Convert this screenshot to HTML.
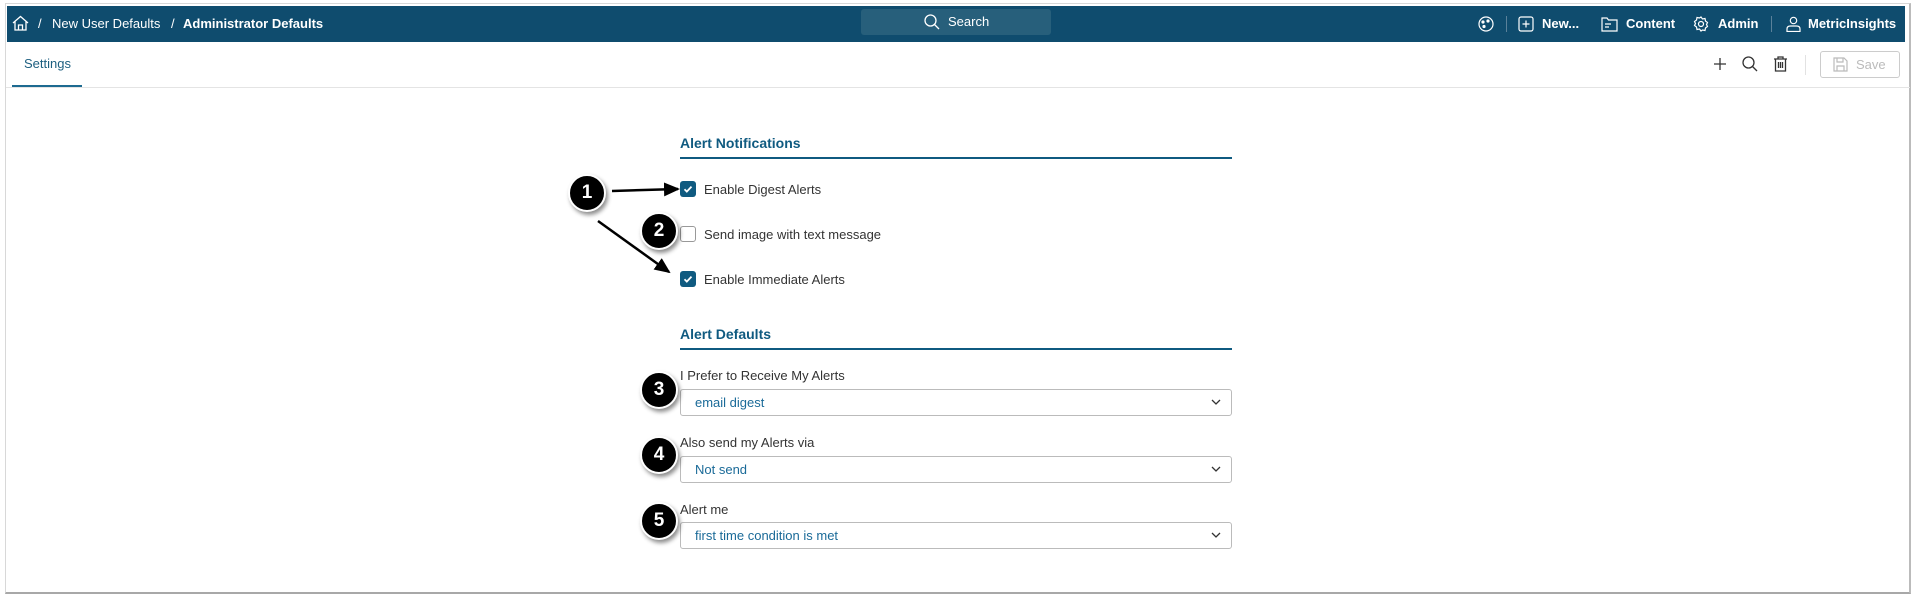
<!DOCTYPE html>
<html><head><meta charset="utf-8"><style>
*{box-sizing:border-box;margin:0;padding:0}
body{width:1913px;height:597px;background:#fff;font-family:"Liberation Sans",sans-serif;position:relative;overflow:hidden}
.frame{position:absolute;left:5px;top:3px;width:1906px;height:591px;border:1px solid #d8d8d8;border-bottom:2px solid #a8a8a8;border-right:2px solid #bbb}
.hdr{position:absolute;left:7px;top:6px;width:1898px;height:36px;background:#0f4c6e;color:#fff;font-size:13px}
.a{position:absolute;top:0;line-height:36px;white-space:nowrap}
.srch{position:absolute;left:854px;top:3px;width:190px;height:26px;background:#275f7b;border-radius:3px}
.t{position:absolute;white-space:nowrap;font-size:13px;color:#333}
.cb{position:absolute;left:680px;width:16px;height:16px;border-radius:3px;background:#0f5a80}
.cb.off{background:#fff;border:1.5px solid #999}
.sec{position:absolute;left:680px;font-size:14px;font-weight:bold;color:#0f5a80}
.line{position:absolute;left:680px;width:552px;height:2px;background:#0f5a80}
.sel{position:absolute;left:680px;width:552px;height:27px;border:1px solid #bbb;border-radius:3px;font-size:13px;color:#1a6a98;padding-left:14px;line-height:25px}
.sel svg{position:absolute;right:10px;top:9px}
.c{position:absolute;width:38px;height:38px;border-radius:50%;background:#000;border:2px solid #fff;box-shadow:2px 3px 4px rgba(0,0,0,.45);color:#fff;font-weight:bold;font-size:19px;text-align:center;line-height:34px}
</style></head><body>
<div class="frame"></div>
<div class="hdr">
<svg style="position:absolute;left:5px;top:9px" width="17" height="16" viewBox="0 0 17 16" fill="none" stroke="#fff" stroke-width="1.3"><path d="M1 8L8.5 1.5 16 8M3 6.5V15h11V6.5M6.5 15v-5h4v5"/></svg>
<span class="a" style="left:31px">/</span>
<span class="a" style="left:45px">New User Defaults</span>
<span class="a" style="left:164px">/</span>
<span class="a" style="left:176px;font-weight:bold">Administrator Defaults</span>
<div class="srch"><svg style="position:absolute;left:63px;top:5px" width="16" height="16" viewBox="0 0 16 16" fill="none" stroke="#fff" stroke-width="1.3"><circle cx="6.5" cy="6.5" r="5.5"/><path d="M10.5 10.5L15 15"/></svg><span style="position:absolute;left:87px;top:0;line-height:26px">Search</span></div>
<svg style="position:absolute;left:1471px;top:10px" width="16" height="16" viewBox="0 0 16 16" fill="none" stroke="#fff" stroke-width="1.2"><circle cx="8" cy="8" r="7"/><circle cx="5" cy="6" r="1" fill="#fff"/><circle cx="10" cy="5" r="1" fill="#fff"/><circle cx="6" cy="10.5" r="1" fill="#fff"/></svg>
<div style="position:absolute;left:1499px;top:10px;width:1px;height:16px;background:#5a819a"></div>
<svg style="position:absolute;left:1511px;top:10px" width="16" height="16" viewBox="0 0 16 16" fill="none" stroke="#fff" stroke-width="1.2"><rect x="1" y="1" width="14" height="14" rx="2"/><path d="M8 4.5v7M4.5 8h7"/></svg>
<span class="a" style="left:1535px;font-weight:bold">New...</span>
<svg style="position:absolute;left:1594px;top:10px" width="17" height="16" viewBox="0 0 17 16" fill="none" stroke="#fff" stroke-width="1.2"><path d="M1 2h5l1.5 2H16v11H1z"/><path d="M4 8h6M4 11h4"/></svg>
<span class="a" style="left:1619px;font-weight:bold">Content</span>
<svg style="position:absolute;left:1686px;top:10px" width="16" height="16" viewBox="0 0 16 16" fill="none" stroke="#fff" stroke-width="1.2"><circle cx="8" cy="8" r="2.5"/><path d="M8 1l1.5 2 2.5-.5.5 2.5 2 1.5-1 2 1 2-2 1.5-.5 2.5-2.5-.5L8 15l-1.5-2-2.5.5-.5-2.5-2-1.5 1-2-1-2 2-1.5.5-2.5 2.5.5z"/></svg>
<span class="a" style="left:1711px;font-weight:bold">Admin</span>
<div style="position:absolute;left:1764px;top:10px;width:1px;height:16px;background:#5a819a"></div>
<svg style="position:absolute;left:1779px;top:10px" width="15" height="16" viewBox="0 0 15 16" fill="none" stroke="#fff" stroke-width="1.2"><circle cx="7.5" cy="4.5" r="3.2"/><path d="M1 15.5v-2.5c0-2 1.5-3 3.5-3h6c2 0 3.5 1 3.5 3v2.5z"/></svg>
<span class="a" style="left:1801px;font-weight:bold">MetricInsights</span>
</div>
<span class="t" style="left:24px;top:56px;color:#1d5f80">Settings</span>
<div style="position:absolute;left:12px;top:85px;width:70px;height:2px;background:#1d6a90"></div>
<div style="position:absolute;left:6px;top:87px;width:1904px;height:1px;background:#e4e4e4"></div>
<svg style="position:absolute;left:1713px;top:57px" width="14" height="14" viewBox="0 0 14 14" stroke="#333" stroke-width="1.3"><path d="M7 1v12M1 7h12"/></svg>
<svg style="position:absolute;left:1742px;top:56px" width="16" height="16" viewBox="0 0 16 16" fill="none" stroke="#333" stroke-width="1.3"><circle cx="6.5" cy="6.5" r="5.5"/><path d="M10.5 10.5L15 15"/></svg>
<svg style="position:absolute;left:1773px;top:56px" width="15" height="16" viewBox="0 0 15 16" fill="none" stroke="#333" stroke-width="1.3"><path d="M1 3h13M5 3V1h5v2M2.5 3v12h10V3M5.5 6v6M7.5 6v6M9.5 6v6"/></svg>
<div style="position:absolute;left:1805px;top:55px;width:1px;height:20px;background:#e2e2e2"></div>
<div style="position:absolute;left:1820px;top:51px;width:80px;height:27px;border:1px solid #ccc;border-radius:3px;color:#bbb;font-size:13px;line-height:25px;padding-left:35px">Save</div>
<svg style="position:absolute;left:1833px;top:57px" width="15" height="15" viewBox="0 0 15 15" fill="none" stroke="#bbb" stroke-width="1.2"><path d="M1 1h10l3 3v10H1z"/><path d="M4 1v4h6V1M4 14V9h7v5"/></svg>

<div class="sec" style="top:135px">Alert Notifications</div>
<div class="line" style="top:157px"></div>
<div class="cb" style="top:181px"><svg width="16" height="16" viewBox="0 0 16 16" fill="none" stroke="#fff" stroke-width="1.8"><path d="M4.5 8.3l2.3 2.3 4.7-5"/></svg></div>
<span class="t" style="left:704px;top:182px">Enable Digest Alerts</span>
<div class="cb off" style="top:226px"></div>
<span class="t" style="left:704px;top:227px">Send image with text message</span>
<div class="cb" style="top:271px"><svg width="16" height="16" viewBox="0 0 16 16" fill="none" stroke="#fff" stroke-width="1.8"><path d="M4.5 8.3l2.3 2.3 4.7-5"/></svg></div>
<span class="t" style="left:704px;top:272px">Enable Immediate Alerts</span>

<div class="sec" style="top:326px">Alert Defaults</div>
<div class="line" style="top:348px"></div>
<span class="t" style="left:680px;top:368px">I Prefer to Receive My Alerts</span>
<div class="sel" style="top:389px">email digest<svg width="10" height="7" viewBox="0 0 10 7" fill="none" stroke="#333" stroke-width="1.3"><path d="M1 1l4 4 4-4"/></svg></div>
<span class="t" style="left:680px;top:435px">Also send my Alerts via</span>
<div class="sel" style="top:456px">Not send<svg width="10" height="7" viewBox="0 0 10 7" fill="none" stroke="#333" stroke-width="1.3"><path d="M1 1l4 4 4-4"/></svg></div>
<span class="t" style="left:680px;top:502px">Alert me</span>
<div class="sel" style="top:522px">first time condition is met<svg width="10" height="7" viewBox="0 0 10 7" fill="none" stroke="#333" stroke-width="1.3"><path d="M1 1l4 4 4-4"/></svg></div>

<svg style="position:absolute;left:0;top:0" width="1913" height="597">
<defs><marker id="m" markerWidth="16" markerHeight="14" refX="14" refY="7" orient="auto" markerUnits="userSpaceOnUse"><path d="M0 0L16 7 0 14z" fill="#000"/></marker></defs>
<line x1="612" y1="191" x2="678" y2="189" stroke="#000" stroke-width="2.5" marker-end="url(#m)"/>
<line x1="598" y1="221" x2="669" y2="272" stroke="#000" stroke-width="2.5" marker-end="url(#m)"/>
</svg>
<div class="c" style="left:568px;top:174px">1</div>
<div class="c" style="left:640px;top:212px">2</div>
<div class="c" style="left:640px;top:371px">3</div>
<div class="c" style="left:640px;top:436px">4</div>
<div class="c" style="left:640px;top:502px">5</div>
</body></html>
